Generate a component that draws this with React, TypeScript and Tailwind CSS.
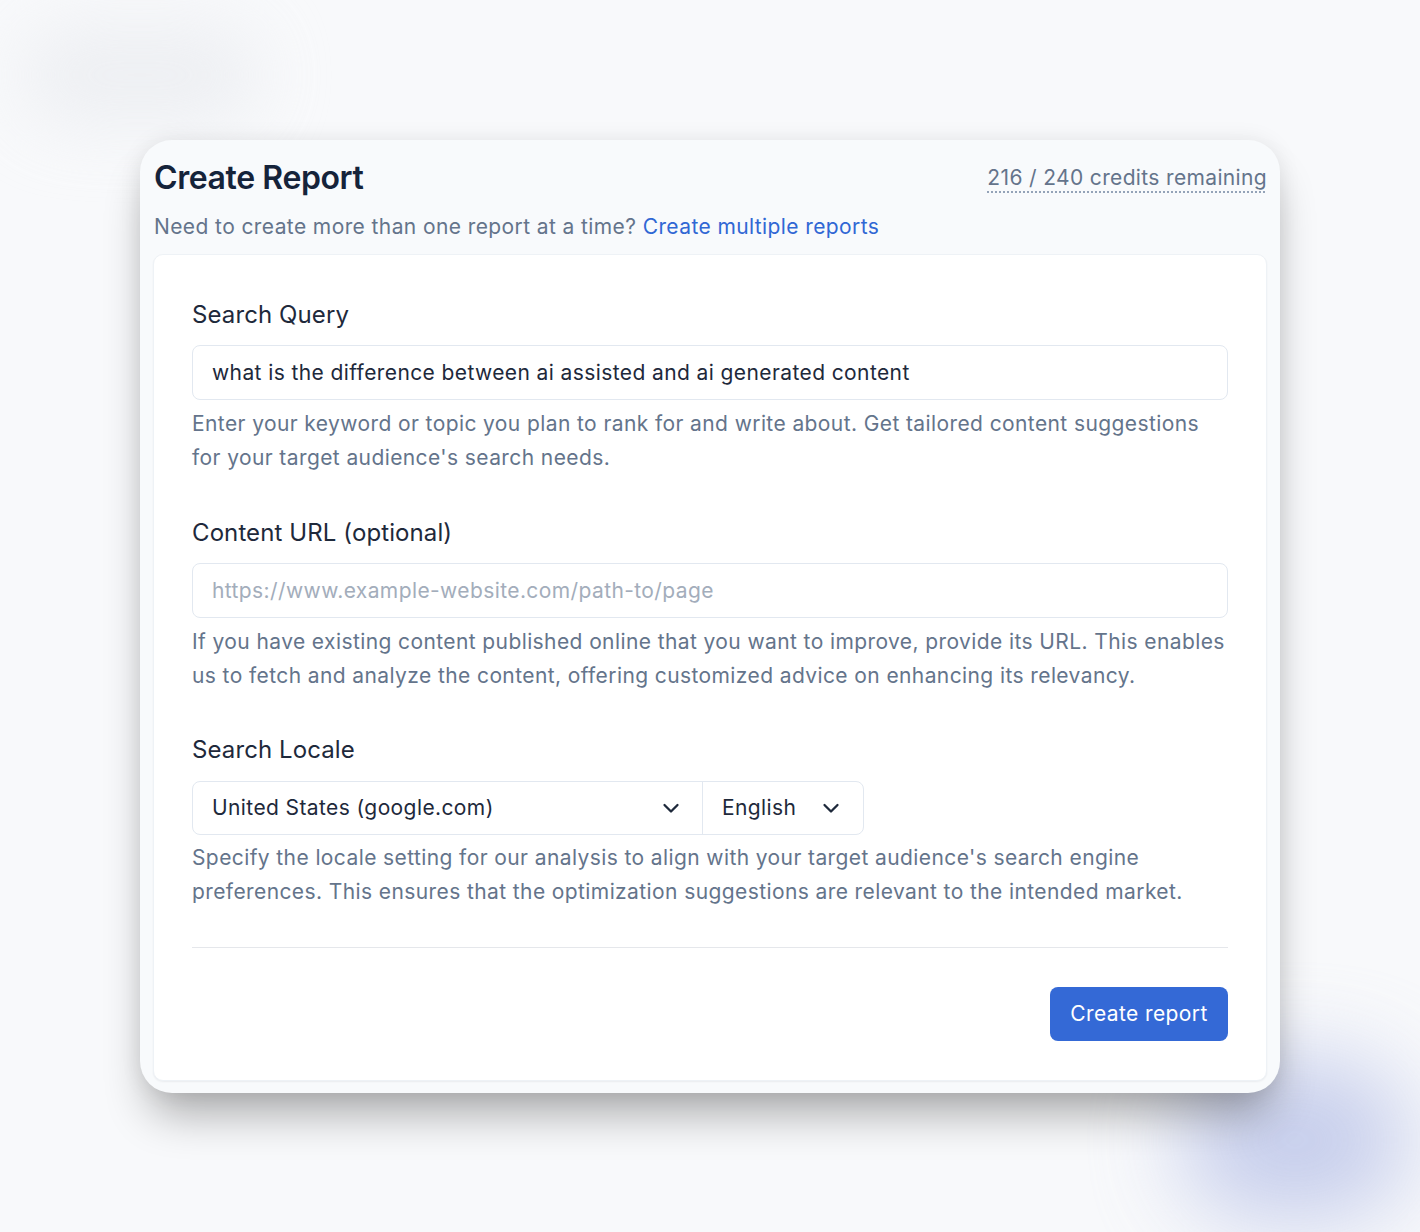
import React from "react";

function Chevron() {
  return (
    <svg width="20" height="20" viewBox="0 0 20 20" fill="none" className="shrink-0">
      <path d="M3.5 7 L10 13.5 L16.5 7" stroke="#1e293b" strokeWidth="2.3" strokeLinecap="round" strokeLinejoin="round" />
    </svg>
  );
}

export default function App() {
  return (
    <div
      className="relative min-h-[1232px] w-full overflow-hidden bg-[#f8f9fb] pt-[140px]"
      style={{ fontFamily: "Inter, 'Noto Sans', sans-serif" }}
    >
      <div className="pointer-events-none absolute left-[20px] top-[25px] h-[100px] w-[240px] rounded-full bg-[#e9ebef] opacity-70 blur-[35px]" />
      <div className="pointer-events-none absolute left-[1180px] top-[1060px] h-[160px] w-[230px] rounded-full bg-[#bac3e8] opacity-80 blur-[45px]" />

      <div className="relative mx-auto w-[1140px] rounded-[32px] bg-[#f8fafc] px-[13px] pb-[12px] pt-[19px] shadow-[0_30px_45px_-10px_rgba(0,0,0,0.32),0_0_22px_rgba(0,0,0,0.08)]">
        <div className="flex items-start justify-between pl-[1px]">
          <h1 className="text-[32px] font-semibold leading-[38px] tracking-[-0.4px] text-[#15233a]">Create Report</h1>
          <span className="mt-[5px] text-[21px] leading-[28px] tracking-[0.35px] text-[#64748b] underline decoration-[#94a3b8] decoration-dotted decoration-[1.5px] underline-offset-[6px]">
            216 / 240 credits remaining
          </span>
        </div>
        <p className="mt-[16px] pl-[1px] text-[21px] leading-[28px] tracking-[0.4px] text-[#64748b]">
          Need to create more than one report at a time?{" "}
          <a className="text-[#3067d4]">Create multiple reports</a>
        </p>

        <div className="mt-[13px] rounded-[10px] border border-[#eef2f6] bg-white px-[38px] pb-[39px] pt-[44px] shadow-[0_1px_2px_rgba(15,23,42,0.06)]">
          <div className="flex flex-col">
            <label className="text-[24px] leading-[32px] tracking-[0.1px] text-[#1e293b]">Search Query</label>
            <div className="mt-[14px] flex h-[55px] items-center rounded-[8px] border border-[#e2e8f0] px-[19px] text-[21px] tracking-[0.4px] text-[#1e293b]">
              what is the difference between ai assisted and ai generated content
            </div>
            <p className="mt-[7px] text-[21px] leading-[34px] tracking-[0.4px] text-[#64748b]">
              Enter your keyword or topic you plan to rank for and write about. Get tailored content suggestions for your target audience's search needs.
            </p>
          </div>

          <div className="mt-[42px] flex flex-col">
            <label className="text-[24px] leading-[32px] tracking-[0.1px] text-[#1e293b]">Content URL (optional)</label>
            <div className="mt-[14px] flex h-[55px] items-center rounded-[8px] border border-[#e2e8f0] px-[19px] text-[21px] tracking-[0.4px] text-[#a3adbb]">
              https://www.example-website.com/path-to/page
            </div>
            <p className="mt-[7px] text-[21px] leading-[34px] tracking-[0.4px] text-[#64748b]">
              If you have existing content published online that you want to improve, provide its URL. This enables us to fetch and analyze the content, offering customized advice on enhancing its relevancy.
            </p>
          </div>

          <div className="mt-[41px] flex flex-col">
            <label className="text-[24px] leading-[32px] tracking-[0.1px] text-[#1e293b]">Search Locale</label>
            <div className="mt-[15px] flex h-[54px] w-[672px] rounded-[8px] border border-[#e2e8f0] text-[21px] tracking-[0.4px] text-[#1e293b]">
              <div className="flex w-[510px] items-center justify-between border-r border-[#e2e8f0] pl-[19px] pr-[21px]">
                <span>United States (google.com)</span>
                <Chevron />
              </div>
              <div className="flex flex-1 items-center justify-between pl-[19px] pr-[22px]">
                <span>English</span>
                <Chevron />
              </div>
            </div>
            <p className="mt-[6px] text-[21px] leading-[34px] tracking-[0.4px] text-[#64748b]">
              Specify the locale setting for our analysis to align with your target audience's search engine preferences. This ensures that the optimization suggestions are relevant to the intended market.
            </p>
          </div>

          <div className="mt-[38px] h-px bg-[#e5e7eb]" />

          <div className="mt-[39px] flex justify-end">
            <button className="h-[54px] w-[178px] rounded-[8px] bg-[#3469d6] text-[21px] tracking-[0.4px] text-white">Create report</button>
          </div>
        </div>
      </div>
    </div>
  );
}
